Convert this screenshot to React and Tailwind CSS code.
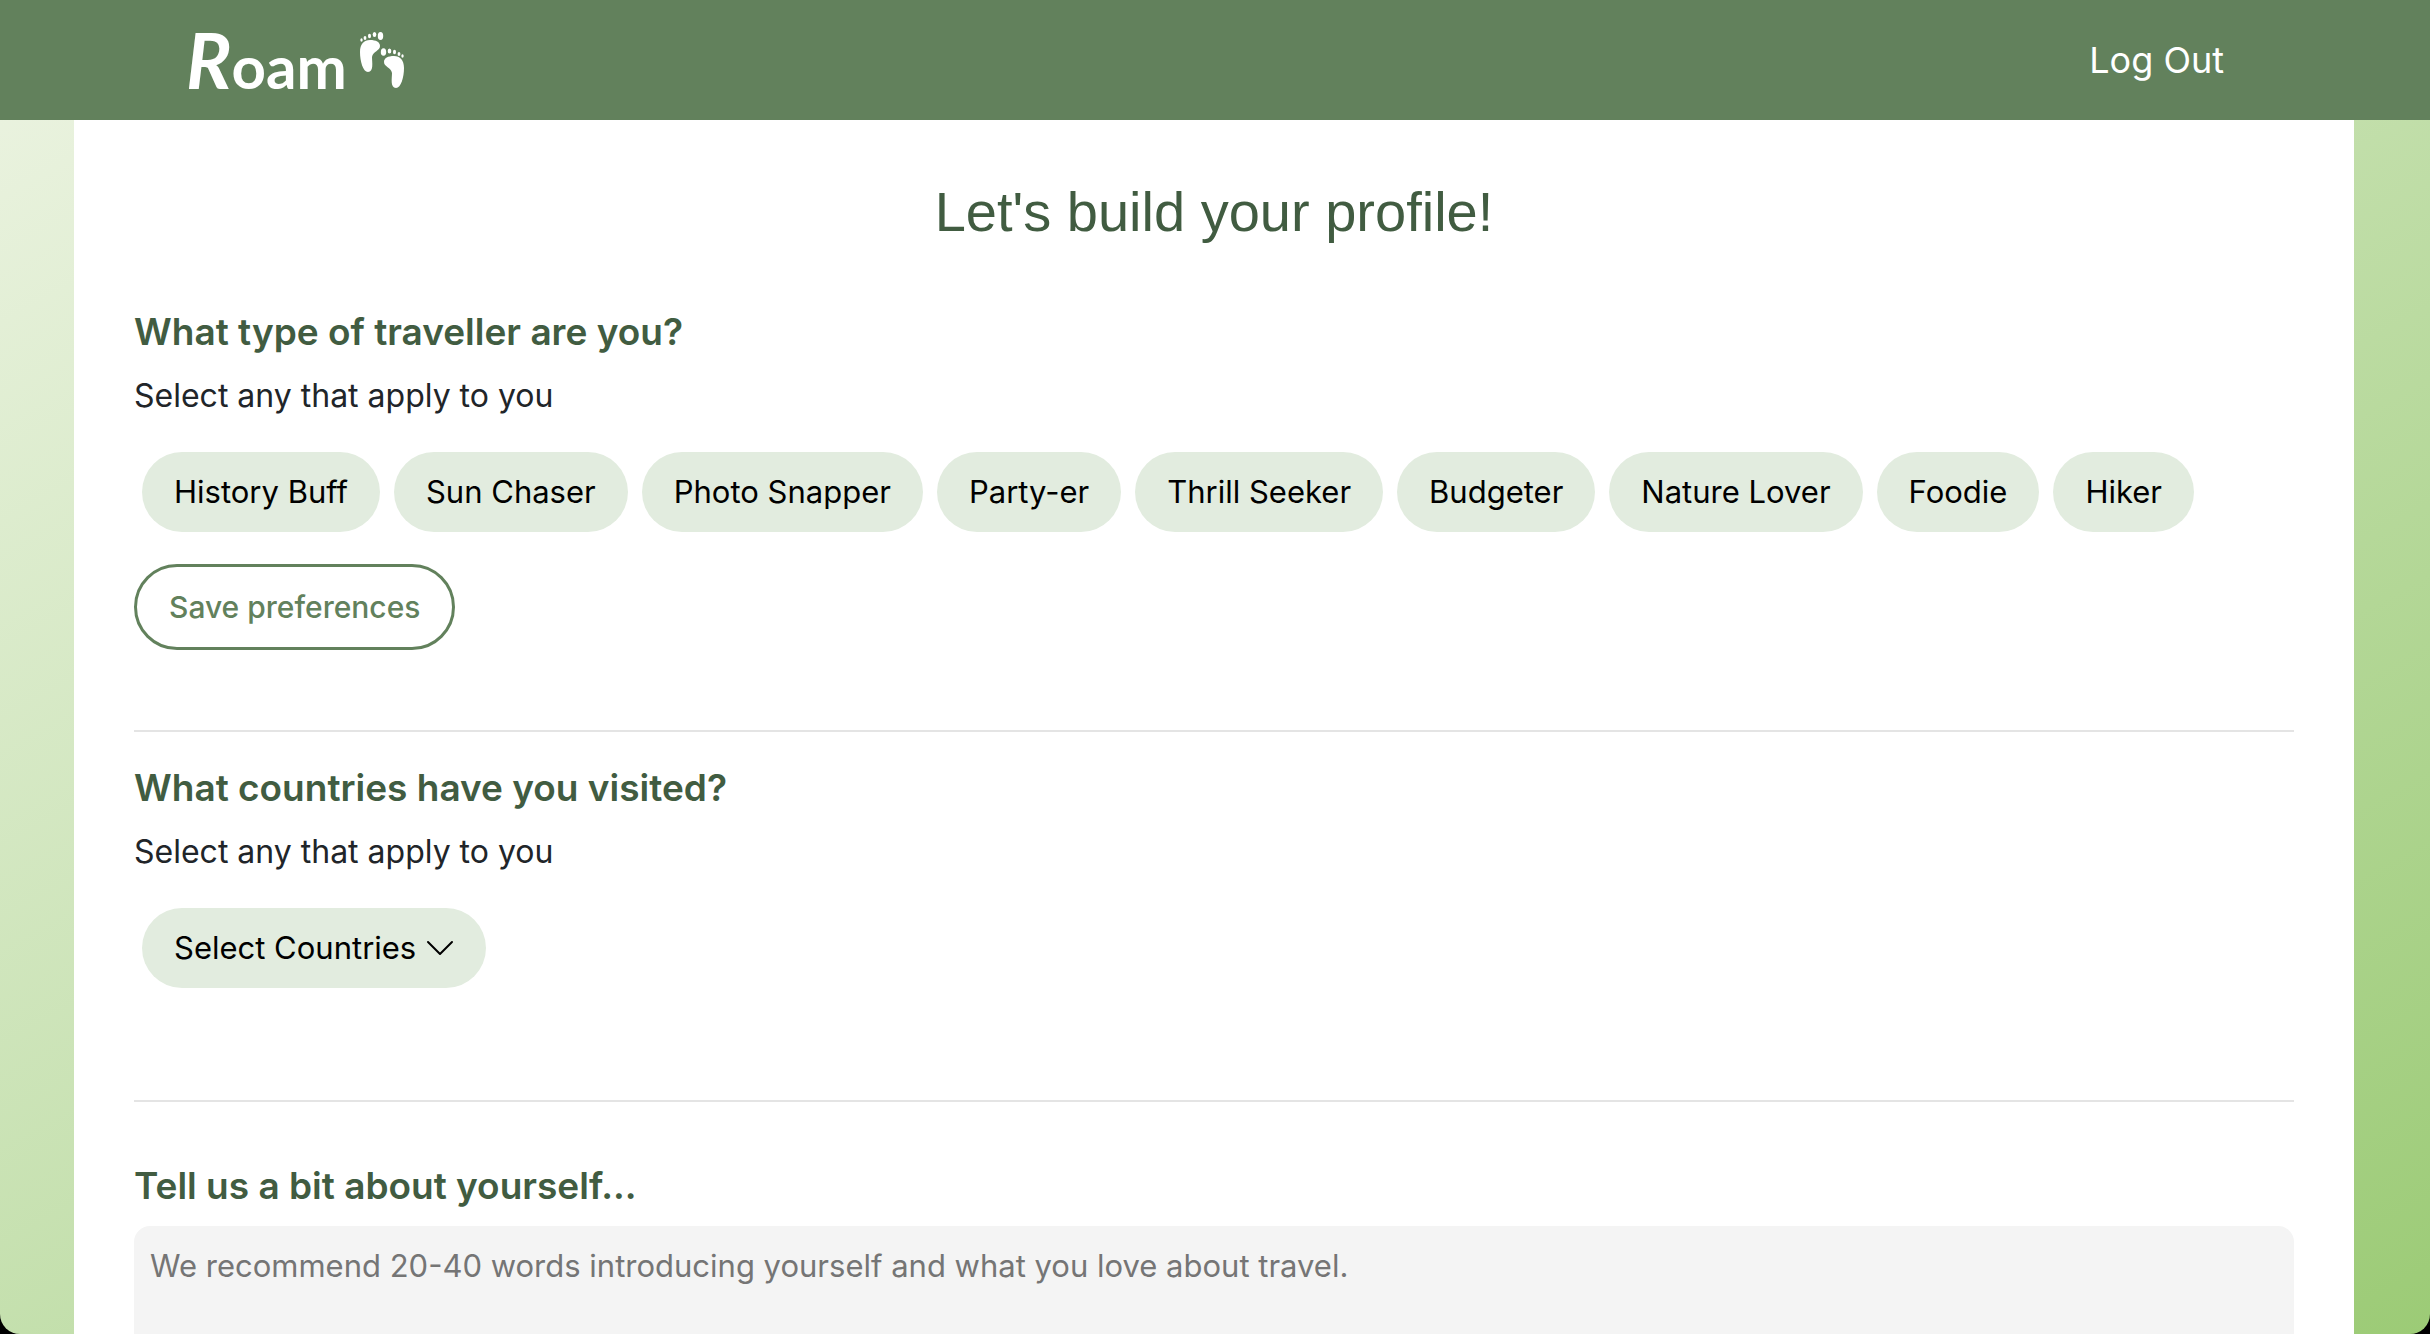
const travellerTypes = [
  'History Buff', 'Sun Chaser', 'Photo Snapper', 'Party-er', 'Thrill Seeker',
  'Budgeter', 'Nature Lover', 'Foodie', 'Hiker',
];

function Footprints() {
  return (
    <svg viewBox="0 0 46 58" className="h-[58px] w-[46px]" fill="currentColor" aria-hidden="true">
      <path d="M1 21C1 13 5 9 11 9C17 9 21 11 21 15C21 20 14 20 13 26C13 31 15 41 9 41C4 41 1 30 1 21Z" />
      <ellipse cx="21.5" cy="5" rx="2.7" ry="4" />
      <ellipse cx="15.5" cy="3.5" rx="1.8" ry="2.6" />
      <ellipse cx="10.5" cy="5" rx="1.5" ry="2.2" />
      <ellipse cx="6" cy="7" rx="1.4" ry="2" />
      <ellipse cx="2.5" cy="9" rx="1.2" ry="1.8" />
      <path d="M45 37C45 29 41 25 35 25C29 25 25 27 25 31C25 36 32 36 33 42C33 47 31 57 37 57C42 57 45 46 45 37Z" />
      <ellipse cx="24.5" cy="21" rx="2.7" ry="3.8" />
      <ellipse cx="30.5" cy="20" rx="1.8" ry="2.6" />
      <ellipse cx="35.5" cy="21" rx="1.5" ry="2.2" />
      <ellipse cx="40" cy="23" rx="1.4" ry="2" />
      <ellipse cx="43.5" cy="25" rx="1.2" ry="1.8" />
    </svg>
  );
}

function Pill({ children }) {
  return (
    <button type="button" className="flex h-20 items-center gap-2.5 rounded-full bg-[#e2ecdf] px-8 text-[31px] text-black">
      {children}
    </button>
  );
}

function SectionHeading({ children }) {
  return <h2 className="text-[37px] leading-12 font-semibold text-[#415c41]">{children}</h2>;
}

export default function App() {
  return (
    <div className="h-screen overflow-hidden bg-black font-['Inter',sans-serif]">
      <div className="flex h-full flex-col overflow-hidden rounded-b-[20px] bg-linear-to-br from-[#edf4e3] to-[#9ccb76]">
        <header className="flex h-[120px] shrink-0 items-center justify-between bg-[#62815c] pr-[206px] pl-[186px] text-white">
          <a href="#home" aria-label="Roam" className="flex items-center gap-3">
            <span className="font-['Lato',sans-serif] text-[60px] leading-none font-bold">
              <span className="text-[76px] italic">R</span>oam
            </span>
            <Footprints />
          </a>
          <a href="#logout" className="text-[36px]">Log Out</a>
        </header>
        <main className="mr-[76px] ml-[74px] min-h-0 flex-1 overflow-hidden bg-white px-[60px] pt-14">
          <h1 className="text-center font-['Liberation_Sans',sans-serif] text-[56px] leading-18 text-[#415c41]">
            Let's build your profile!
          </h1>
          <section className="mt-[60px]">
            <SectionHeading>What type of traveller are you?</SectionHeading>
            <p className="mt-4 text-[32px] leading-12 text-[#212529]">Select any that apply to you</p>
            <div className="mt-8 flex flex-wrap gap-3.5 px-2">
              {travellerTypes.map((type) => <Pill key={type}>{type}</Pill>)}
            </div>
            <button type="button" className="mt-8 h-[86px] rounded-full border-3 border-[#62815c] px-8 text-[30px] font-medium text-[#62815c]">
              Save preferences
            </button>
          </section>
          <hr className="mt-20 border-t-2 border-[#e4e4e4]" />
          <section className="mt-8">
            <SectionHeading>What countries have you visited?</SectionHeading>
            <p className="mt-4 text-[32px] leading-12 text-[#212529]">Select any that apply to you</p>
            <div className="mt-8 flex px-2">
              <Pill>
                Select Countries
                <svg viewBox="0 0 28 28" className="size-7" fill="none" stroke="currentColor" strokeWidth="2" strokeLinecap="round" strokeLinejoin="round" aria-hidden="true">
                  <path d="M2 8L14 20L26 8" />
                </svg>
              </Pill>
            </div>
          </section>
          <hr className="mt-28 border-t-2 border-[#e4e4e4]" />
          <section className="mt-15">
            <label htmlFor="about" className="block text-[37px] leading-12 font-semibold text-[#415c41]">Tell us a bit about yourself...</label>
            <textarea id="about" rows="5" placeholder="We recommend 20-40 words introducing yourself and what you love about travel." className="mt-4 block w-full resize-none rounded-2xl bg-[#f4f4f4] p-4 text-[31px] leading-12 placeholder:text-[#757575]" />
          </section>
        </main>
      </div>
    </div>
  );
}
